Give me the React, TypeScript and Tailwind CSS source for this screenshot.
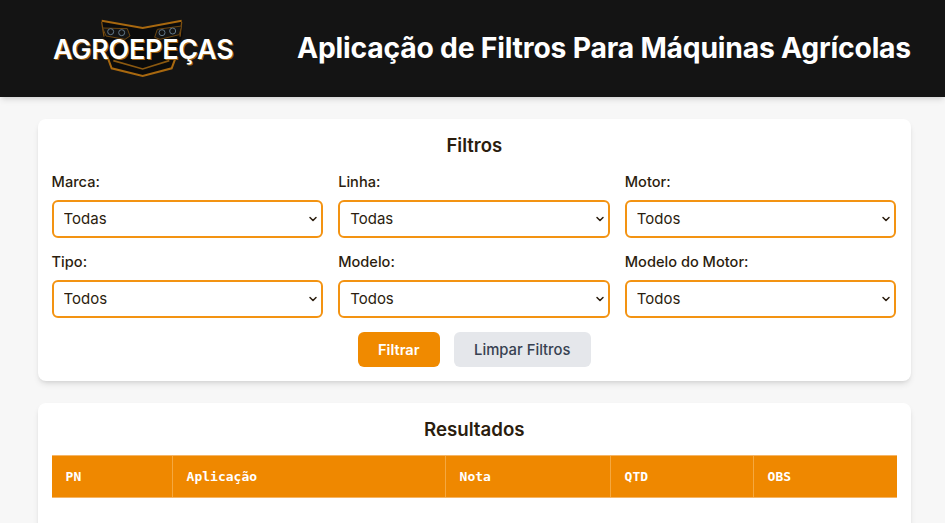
import { FC } from "react";
import { ChevronDown } from "lucide-react";

const FONT = "font-['Inter','Liberation_Sans',sans-serif]";

const filters = [
  { label: "Marca:", value: "Todas" },
  { label: "Linha:", value: "Todas" },
  { label: "Motor:", value: "Todos" },
  { label: "Tipo:", value: "Todos" },
  { label: "Modelo:", value: "Todos" },
  { label: "Modelo do Motor:", value: "Todos" },
];

const columns = [
  { name: "PN", width: "w-[121px]" },
  { name: "Aplicação", width: "w-[273px]" },
  { name: "Nota", width: "w-[165px]" },
  { name: "QTD", width: "w-[143px]" },
  { name: "OBS", width: "flex-1" },
];

// coordinates follow a 3x view of the logo area, hence the big viewBox
const LogoMark: FC = () => (
  <svg width="230" height="100" viewBox="0 0 690 300" fill="none" className="absolute left-[30px] top-0">
    <path d="M215 62 L338 82 L455 62 L458 105 L425 205 L338 228 L245 205 L218 105 Z" fill="#0b0b0b" />
    <path d="M215 62 L338 84 L455 62" stroke="#a8680f" strokeWidth="6" />
    <path d="M215 66 L222 110 M455 66 L450 110" stroke="#7a4d10" strokeWidth="4" />
    <path d="M232 170 L245 205 L338 228 L425 205 L438 170" stroke="#a8680f" strokeWidth="6" />
    <path d="M250 182 L338 207 L418 182" stroke="#8a5810" strokeWidth="5" />
    <path d="M218 84 L292 86 L300 108 L285 118 L228 108 Z" fill="#141414" stroke="#6e4812" strokeWidth="3" />
    <path d="M455 78 L382 88 L374 112 L390 118 L448 104 Z" fill="#141414" stroke="#6e4812" strokeWidth="3" />
    <circle cx="242" cy="95" r="9" stroke="#64798a" strokeWidth="3" />
    <circle cx="275" cy="98" r="9" stroke="#64798a" strokeWidth="3" />
    <circle cx="396" cy="98" r="9" stroke="#64798a" strokeWidth="3" />
    <circle cx="428" cy="93" r="9" stroke="#64798a" strokeWidth="3" />
  </svg>
);

const Logo: FC = () => (
  <div className="relative w-[240px] h-[97px] shrink-0">
    <LogoMark />
    <span className="absolute left-[53px] top-[35px] text-[27px] leading-[30px] font-semibold tracking-[-0.3px] text-white [text-shadow:1px_1px_0_#9a5f12]">
      AGROEPEÇAS
    </span>
  </div>
);

const FilterField: FC<{ label: string; value: string }> = ({ label, value }) => (
  <div className="flex flex-col">
    <label className="text-[14.6px] leading-[21px] font-medium text-[#2b1d0e] mb-[7px]">{label}</label>
    <div className="relative">
      <select
        defaultValue={value}
        className="block h-[38px] w-full appearance-none rounded-[6px] border-2 border-[#f39312] bg-white pl-[10px] pt-[1px] text-[15px] text-[#2b1d0e]"
      >
        <option>{value}</option>
      </select>
      <ChevronDown size={12} strokeWidth={3} className="absolute right-[4px] top-[13px] text-[#2b1d0e]" />
    </div>
  </div>
);

export default function App() {
  return (
    <div className={`${FONT} h-[523px] overflow-hidden bg-[#f7f7f7]`}>
      <header className="h-[97px] bg-[#141414] flex items-center shadow-md">
        <Logo />
        <h1 className="ml-[57px] -mt-[2px] text-[28.3px] leading-[36px] font-bold tracking-[-0.2px] text-white whitespace-nowrap">
          Aplicação de Filtros Para Máquinas Agrícolas
        </h1>
      </header>

      <main className="ml-[37.6px] w-[873.4px] pt-[22px] flex flex-col gap-[22px]">
        <section className="h-[262px] rounded-lg bg-white shadow-md px-[14px] pt-[14px]">
          <h2 className="text-center text-[18.5px] leading-[24px] font-semibold text-[#2b1d0e]">Filtros</h2>
          <div className="mt-[15px] grid grid-cols-3 gap-x-[15px] gap-y-[14px] pr-[0.6px]">
            {filters.map((f) => (
              <FilterField key={f.label} label={f.label} value={f.value} />
            ))}
          </div>
          <div className="mt-[14px] flex justify-center gap-[14px]">
            <button className="h-[35px] w-[82px] rounded-[6px] bg-[#f08a00] pt-[1px] text-[14.7px] font-semibold text-white">
              Filtrar
            </button>
            <button className="h-[35px] w-[137px] rounded-[6px] bg-[#e5e7eb] pt-[1px] text-[14.8px] font-medium text-[#374151]">
              Limpar Filtros
            </button>
          </div>
        </section>

        <section className="h-[200px] rounded-lg bg-white shadow-md px-[14px] pt-[15px]">
          <h2 className="text-center text-[18.7px] leading-[24px] font-semibold text-[#2b1d0e]">Resultados</h2>
          <div className="mt-[13px] h-[43px] flex border-y border-[#f5b566] bg-[#ef8800] font-['DejaVu_Sans_Mono',monospace] text-[13px] font-bold text-white">
            {columns.map((c) => (
              <div
                key={c.name}
                className={`${c.width} flex items-center pl-[14px] border-r border-[#f5a83f] last:border-r-0`}
              >
                {c.name}
              </div>
            ))}
          </div>
        </section>
      </main>
    </div>
  );
}
